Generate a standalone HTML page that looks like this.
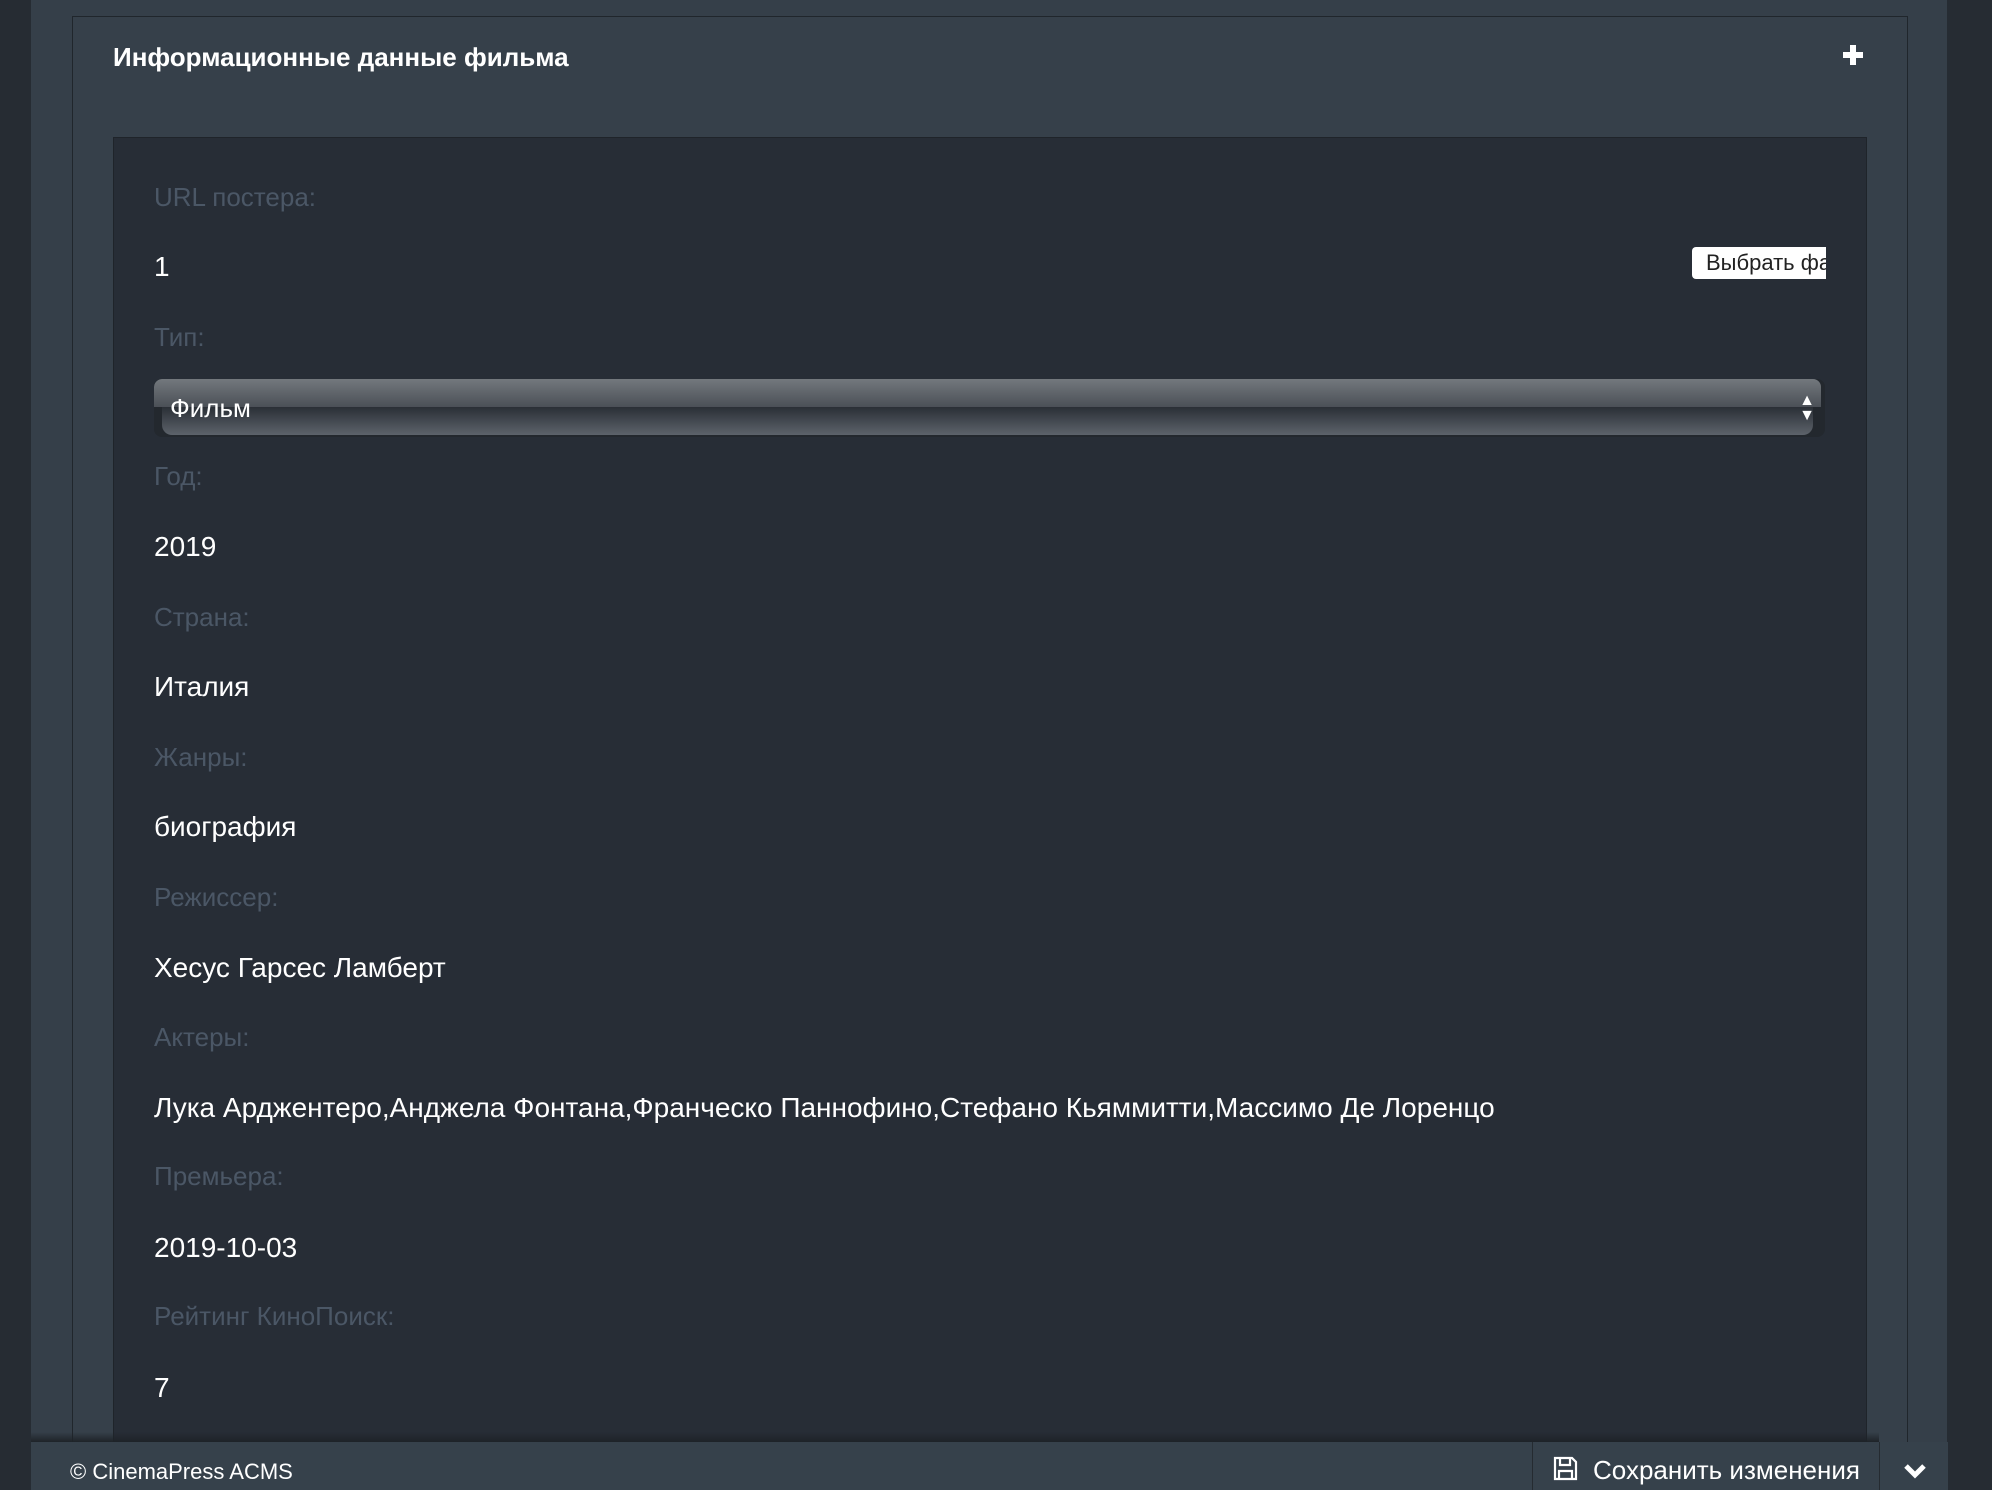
<!DOCTYPE html>
<html><head><meta charset="utf-8"><style>
*{margin:0;padding:0;box-sizing:border-box}
html{width:1992px;height:1490px;overflow:hidden}
body{width:1992px;height:1490px;background:#262c33;position:relative;overflow:hidden;font-family:"Liberation Sans",Arial,sans-serif}
.main{position:absolute;left:31px;top:0;width:1916px;height:1490px;background:#353f49}
.panel{position:absolute;left:72px;top:16px;width:1836px;height:1474px;border:1px solid #20262c;border-bottom:none;background:#36404a}
.title{position:absolute;left:113px;top:42px;color:#fff;font-weight:bold;font-size:26px;line-height:30px}
.plus{position:absolute;left:1843px;top:45px;width:20px;height:20px}
.plus:before{content:"";position:absolute;left:7px;top:0;width:6px;height:20px;background:#fff}
.plus:after{content:"";position:absolute;left:0;top:7px;width:20px;height:6px;background:#fff}
.inner{position:absolute;left:113px;top:137px;width:1754px;height:1353px;background:#272d36;border:1px solid #1f242a;border-bottom:none}
.l,.v{position:absolute;left:154px;line-height:30px;white-space:nowrap}
.l{color:#4b5766;font-size:26px}
.v{color:#fff;font-size:28px}
.sel{position:absolute;left:154px;top:379px;width:1671px;height:58px;border-radius:8px;background:#23282e;overflow:hidden}
.sel .bar{position:absolute;left:0;top:0;right:4px;height:28px;background:linear-gradient(#73787d,#4b5057);border-radius:8px 8px 0 0}
.sel .bot{position:absolute;left:8px;top:28px;right:12px;height:28px;background:linear-gradient(#2a2f36,#5d636b);border-radius:0 0 10px 10px}
.sel .t{position:absolute;left:16px;top:14px;color:#fff;font-size:26px;line-height:30px}
.sel .ar{position:absolute;right:10px;top:14px;color:#fff;font-size:16px;line-height:15px}
.btn{position:absolute;left:1692px;top:247px;width:134px;height:32px;background:#fff;border-radius:4px 0 0 4px;overflow:hidden;color:#222;font-size:22px;line-height:32px;padding-left:14px;white-space:nowrap}
.shadow{position:absolute;left:31px;top:1432px;width:1848px;height:10px;background:linear-gradient(transparent,#1e2328)}
.foot{position:absolute;left:31px;top:1442px;width:1917px;height:48px;background:#36414b}
.foot .c{position:absolute;left:39px;top:17px;color:#fff;font-size:22px;line-height:26px}
.d1{position:absolute;left:1501px;top:0;width:1px;height:48px;background:#252b31}
.d2{position:absolute;left:1848px;top:0;width:1px;height:48px;background:#252b31}
.save{position:absolute;left:1562px;top:13px;color:#fff;font-size:26px;line-height:30px}
</style></head><body>
<div class="main"></div>
<div class="panel"></div>
<div class="title">Информационные данные фильма</div>
<div class="plus"></div>
<div class="inner"></div>
<div class="l" style="top:182px">URL постера:</div>
<div class="v" style="top:252px">1</div>
<div class="btn">Выбрать файл</div>
<div class="l" style="top:322px">Тип:</div>
<div class="sel"><div class="bar"></div><div class="bot"></div><div class="t">Фильм</div><div class="ar">▲<br>▼</div></div>
<div class="l" style="top:461px">Год:</div>
<div class="v" style="top:532px">2019</div>
<div class="l" style="top:602px">Страна:</div>
<div class="v" style="top:672px">Италия</div>
<div class="l" style="top:742px">Жанры:</div>
<div class="v" style="top:812px">биография</div>
<div class="l" style="top:882px">Режиссер:</div>
<div class="v" style="top:953px">Хесус Гарсес Ламберт</div>
<div class="l" style="top:1022px">Актеры:</div>
<div class="v" style="top:1093px">Лука Арджентеро,Анджела Фонтана,Франческо Паннофино,Стефано Кьяммитти,Массимо Де Лоренцо</div>
<div class="l" style="top:1161px">Премьера:</div>
<div class="v" style="top:1233px">2019-10-03</div>
<div class="l" style="top:1301px">Рейтинг КиноПоиск:</div>
<div class="v" style="top:1373px">7</div>
<div class="shadow"></div>
<div class="foot">
<div class="c">© CinemaPress ACMS</div>
<div class="d1"></div>
<div class="d2"></div>
<svg style="position:absolute;left:1522px;top:14px" width="25" height="25" viewBox="0 0 25 25" fill="none" stroke="#fff" stroke-width="2.2"><path d="M2 2h17l4 4v17H2z"/><path d="M7 2v7h10V2"/><path d="M6 23v-8h13v8"/></svg>
<div class="save">Сохранить изменения</div>
<svg style="position:absolute;left:1872px;top:20px" width="24" height="18" viewBox="0 0 24 18"><path d="M3 4l9 9 9-9" fill="none" stroke="#fff" stroke-width="5"/></svg>
</div>
</body></html>
